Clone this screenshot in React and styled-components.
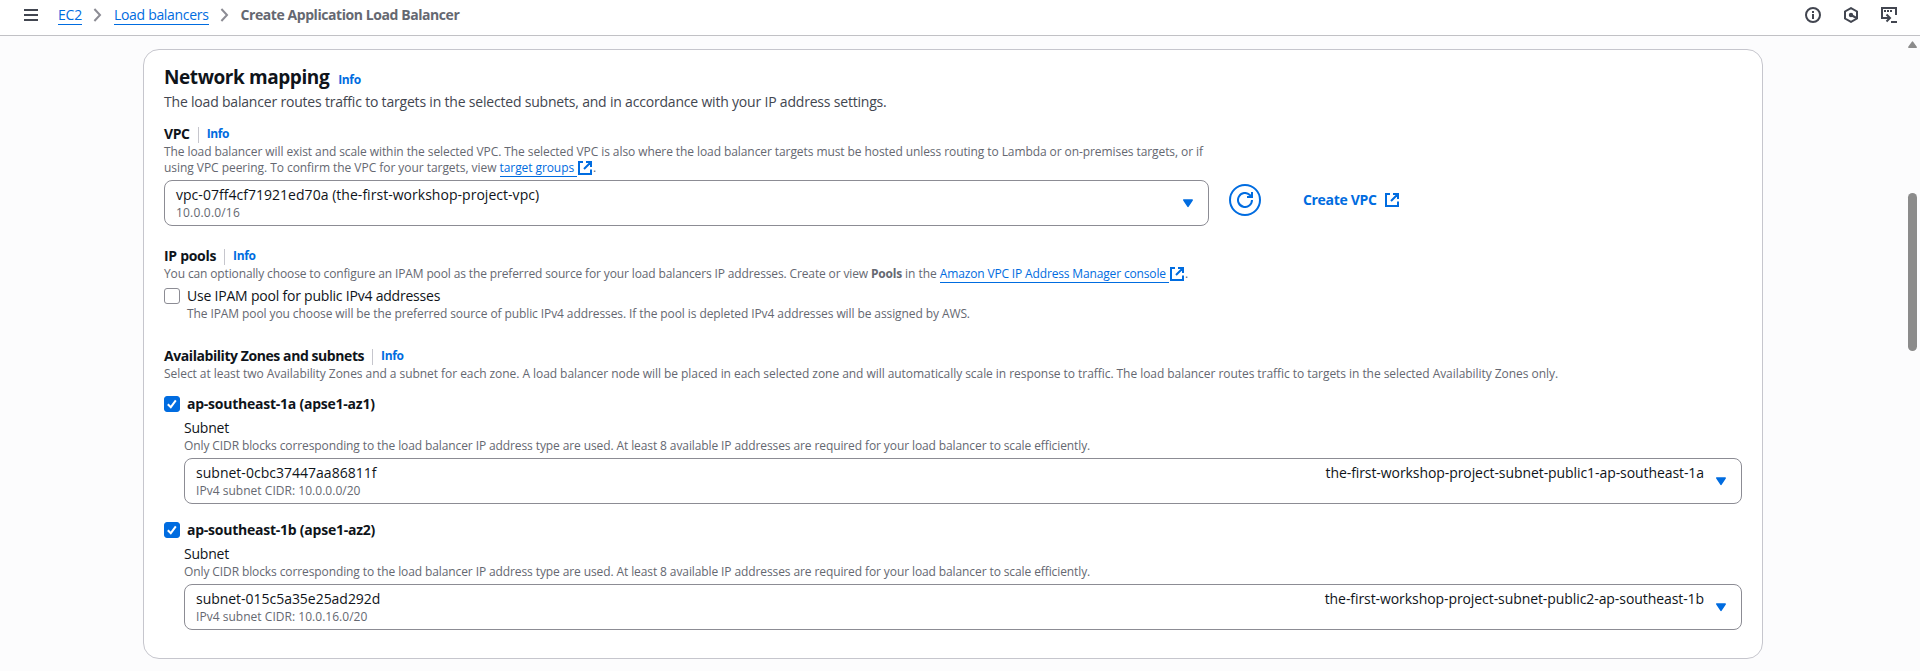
import React from "react";
import styled, { createGlobalStyle } from "styled-components";

const blue = "#006ce0";
const grey = "#656871";

const Global = createGlobalStyle`
  * { box-sizing: border-box; }
  body { margin: 0; background: #fcfcfd; color: #0f141a; overflow: hidden;
    font: 400 14px/20px "Open Sans", "Noto Sans", sans-serif; }
  svg { display: block; }
`;

const T = styled.span`
  white-space: pre;
  letter-spacing: ${(p) => p.$ls || 0}px;
`;

const Page = styled.div`
  height: 671px;
  display: flex;
  flex-direction: column;
`;
const Header = styled.header`
  height: 36px;
  flex: none;
  display: flex;
  align-items: center;
  justify-content: space-between;
  padding: 0 23px 5px 24px;
  background: #fff;
  border-bottom: 1px solid #c1c1c5;
`;
const Crumbs = styled.nav`
  display: flex;
  align-items: center;
`;
const MenuButton = styled.span`
  margin-right: 20px;
`;
const CrumbLink = styled.a`
  color: ${blue};
  height: 20px;
  line-height: 20px;
  border-bottom: 1px solid ${blue};
`;
const Chevron = styled.svg`
  margin: 0 12px 0 11px;
`;
const CrumbCurrent = styled.span`
  color: ${grey};
  font-weight: 700;
`;
const Tools = styled.div`
  display: flex;
  gap: 22px;
`;

const Body = styled.div`
  flex: 1;
  display: flex;
  min-height: 0;
`;
const Content = styled.main`
  flex: 1;
  padding: 13px 142px 12px 143px;
`;
const Scroll = styled.aside`
  width: 15px;
  padding: 5px 3px 0;
`;
const Thumb = styled.div`
  width: 9px;
  height: 158px;
  margin-top: 144px;
  border-radius: 5px;
  background: #8b8b8b;
`;

const Card = styled.section`
  height: 610px;
  border: 1px solid #c6c6cd;
  border-radius: 16px;
  background: #fff;
  padding: 15px 20px 0 20px;
`;
const TitleRow = styled.div`
  display: flex;
  align-items: baseline;
  height: 26px;
`;
const Title = styled.h2`
  margin: 0 9px 0 0;
  font-size: 19px;
  line-height: 24px;
  font-weight: 700;
`;
const Info = styled.a`
  color: ${blue};
  font-size: 12px;
  line-height: 16px;
  font-weight: 700;
`;
const Lead = styled.p`
  margin: 1px 0 0;
  color: #424650;
`;
const LabelRow = styled.div`
  display: flex;
  align-items: center;
  height: 20px;
  margin-top: ${(p) => p.$top}px;
`;
const Label = styled.span`
  font-weight: 700;
`;
const Divider = styled.i`
  width: 1px;
  height: 16px;
  margin: 2px 8px 0 8px;
  background: #c6c6cd;
`;
const Hint = styled.div`
  display: flex;
  height: 16px;
  color: ${grey};
  font-size: 12px;
  line-height: 16px;
`;
const HintLink = styled.a`
  display: flex;
  color: ${blue};
`;
const Underlined = styled.span`
  height: 17px;
  padding-right: 3px;
  border-bottom: 1px solid ${blue};
`;
const Strong = styled.b`
  font-weight: 700;
`;

const SelectRow = styled.div`
  display: flex;
  align-items: flex-start;
  margin-top: 4px;
`;
const SelectBox = styled.div`
  display: flex;
  justify-content: space-between;
  width: ${(p) => p.$w}px;
  height: 46px;
  margin-top: ${(p) => p.$top || 0}px;
  padding: 4px 14px 0 11px;
  border: 1px solid #8c8c94;
  border-radius: 8px;
`;
const OptionText = styled.div`
  display: flex;
  flex-direction: column;
`;
const OptionSub = styled.span`
  color: ${grey};
  font-size: 12px;
  line-height: 16px;
`;
const Trailing = styled.div`
  display: flex;
  gap: 11px;
`;
const Caret = styled.svg`
  margin-top: 13px;
`;
const RefreshButton = styled.button`
  display: flex;
  align-items: center;
  justify-content: center;
  width: 32px;
  height: 32px;
  margin: 4px 42px 0 20px;
  padding: 0;
  border: 2px solid ${blue};
  border-radius: 50%;
  background: #fff;
`;
const CreateLink = styled.a`
  display: flex;
  align-items: center;
  gap: 7px;
  height: 32px;
  margin-top: 4px;
  color: ${blue};
  font-weight: 700;
`;

const CheckRow = styled.div`
  display: flex;
  align-items: center;
  gap: 7px;
  height: 20px;
  margin-top: ${(p) => p.$top}px;
  font-weight: ${(p) => (p.$bold ? 700 : 400)};
`;
const Box = styled.span`
  width: 16px;
  height: 16px;
  border-radius: 3px;
  border: 1px solid ${(p) => (p.$on ? blue : "#8c8c94")};
  background: ${(p) => (p.$on ? blue : "#fff")};
`;
const Indent = styled.div`
  padding-left: ${(p) => p.$by}px;
`;
const FieldName = styled.div`
  margin-top: 4px;
  height: 20px;
`;

const External = () => (
  <svg width="16" height="16" viewBox="0 0 16 16" fill="none" stroke={blue} strokeWidth="2">
    <path d="M6 2H2v12h12V9.5M9 2h5v5M14 2L7 9" />
  </svg>
);
const CaretDown = () => (
  <Caret width="12" height="11" viewBox="0 0 12 11">
    <path d="M1.8 2h8.4L6 8.4z" fill={blue} stroke={blue} strokeWidth="1.5" strokeLinejoin="round" />
  </Caret>
);
const Crumb = () => (
  <Chevron width="9" height="14" viewBox="0 0 9 14" fill="none" stroke="#8c8c94" strokeWidth="2">
    <path d="M1.4 1l5.6 6-5.6 6" />
  </Chevron>
);
const Check = ({ on }) => (
  <Box $on={on}>
    {on && (
      <svg width="14" height="14" viewBox="0 0 14 14" fill="none" stroke="#fff" strokeWidth="2">
        <path d="M2.8 7.2l3 3 5-6.8" />
      </svg>
    )}
  </Box>
);

const Heading = ({ top, ls, children }) => (
  <LabelRow $top={top}>
    <Label><T $ls={ls}>{children}</T></Label>
    <Divider />
    <Info><T $ls={-0.36}>Info</T></Info>
  </LabelRow>
);

const Zone = ({ top, name, subnet, subnetLs, cidr, tag }) => (
  <>
    <CheckRow $top={top} $bold>
      <Check on />
      <T $ls={-0.24}>{name}</T>
    </CheckRow>
    <Indent $by={20}>
      <FieldName><T $ls={-0.21}>Subnet</T></FieldName>
      <Hint>
        <T $ls={-0.104}>Only CIDR blocks corresponding to the load balancer IP address type are used. At least 8 available IP addresses are required for your load balancer to scale efficiently.</T>
      </Hint>
      <SelectBox $w={1558} $top={4}>
        <OptionText>
          <T $ls={subnetLs}>{subnet}</T>
          <OptionSub><T $ls={0.03}>{cidr}</T></OptionSub>
        </OptionText>
        <Trailing>
          <T $ls={-0.078}>{tag}</T>
          <CaretDown />
        </Trailing>
      </SelectBox>
    </Indent>
  </>
);

export default function App() {
  return (
    <Page>
      <Global />
      <Header>
        <Crumbs>
          <MenuButton>
            <svg width="14" height="12" viewBox="0 0 14 12" fill="#424650">
              <path d="M0 0h14v2H0zM0 5h14v2H0zM0 10h14v2H0z" />
            </svg>
          </MenuButton>
          <CrumbLink><T $ls={-0.2}>EC2</T></CrumbLink>
          <Crumb />
          <CrumbLink><T $ls={-0.315}>Load balancers</T></CrumbLink>
          <Crumb />
          <CrumbCurrent><T $ls={-0.43}>Create Application Load Balancer</T></CrumbCurrent>
        </Crumbs>
        <Tools>
          <svg width="16" height="16" viewBox="0 0 16 16" fill="none" stroke="#424650" strokeWidth="2">
            <circle cx="8" cy="8" r="7" />
            <path d="M8 4v2M8 7v5" />
          </svg>
          <svg width="16" height="16" viewBox="0 0 16 16" fill="none" stroke="#424650" strokeWidth="2">
            <path d="M8 1.1l6 3.4v7l-6 3.4-6-3.4v-7z" />
            <circle cx="8" cy="8" r="1.2" fill="#424650" />
            <path d="M8 8l5.5 3" />
          </svg>
          <svg width="16" height="16" viewBox="0 0 16 16" fill="none" stroke="#424650" strokeWidth="2">
            <path d="M4 11H1V1h14v7M3 4h2M6 4h2M9 4h2M10 15h6M4 11h4M5.5 7.5L9 11l-3.5 3.5" />
          </svg>
        </Tools>
      </Header>
      <Body>
        <Content>
          <Card>
            <TitleRow>
              <Title><T $ls={-0.42}>Network mapping</T></Title>
              <Info><T $ls={-0.36}>Info</T></Info>
            </TitleRow>
            <Lead>
              <T $ls={-0.195}>The load balancer routes traffic to targets in the selected subnets, and in accordance with your IP address settings.</T>
            </Lead>

            <Heading top={12} ls={-0.4}>VPC</Heading>
            <Hint>
              <T $ls={-0.082}>The load balancer will exist and scale within the selected VPC. The selected VPC is also where the load balancer targets must be hosted unless routing to Lambda or on-premises targets, or if</T>
            </Hint>
            <Hint>
              <T $ls={-0.048}>{"using VPC peering. To confirm the VPC for your targets, view "}</T>
              <HintLink>
                <Underlined><T $ls={-0.08}>target groups</T></Underlined>
                <External />
              </HintLink>
              <T>.</T>
            </Hint>
            <SelectRow>
              <SelectBox $w={1045}>
                <OptionText>
                  <T $ls={0.03}>vpc-07ff4cf71921ed70a (the-first-workshop-project-vpc)</T>
                  <OptionSub><T $ls={0.19}>10.0.0.0/16</T></OptionSub>
                </OptionText>
                <CaretDown />
              </SelectBox>
              <RefreshButton>
                <svg width="16" height="16" viewBox="0 0 16 16" fill="none" stroke={blue} strokeWidth="2">
                  <path d="M15 8a7 7 0 1 1-2.2-5.1L14.5 5M15 0v5H10" />
                </svg>
              </RefreshButton>
              <CreateLink>
                <T $ls={-0.33}>Create VPC</T>
                <External />
              </CreateLink>
            </SelectRow>

            <Heading top={20} ls={-0.3}>IP pools</Heading>
            <Hint>
              <T $ls={-0.131}>{"You can optionally choose to configure an IPAM pool as the preferred source for your load balancers IP addresses. Create or view "}</T>
              <Strong><T $ls={-0.2}>Pools</T></Strong>
              <T $ls={-0.05}>{" in the "}</T>
              <HintLink>
                <Underlined><T $ls={-0.15}>Amazon VPC IP Address Manager console</T></Underlined>
                <External />
              </HintLink>
              <T>.</T>
            </Hint>
            <CheckRow $top={4}>
              <Check />
              <T $ls={-0.21}>Use IPAM pool for public IPv4 addresses</T>
            </CheckRow>
            <Indent $by={23}>
              <Hint>
                <T $ls={-0.093}>The IPAM pool you choose will be the preferred source of public IPv4 addresses. If the pool is depleted IPv4 addresses will be assigned by AWS.</T>
              </Hint>
            </Indent>

            <Heading top={24} ls={-0.43}>Availability Zones and subnets</Heading>
            <Hint>
              <T $ls={-0.052}>Select at least two Availability Zones and a subnet for each zone. A load balancer node will be placed in each selected zone and will automatically scale in response to traffic. The load balancer routes traffic to targets in the selected Availability Zones only.</T>
            </Hint>
            <Zone
              top={12}
              name="ap-southeast-1a (apse1-az1)"
              subnet="subnet-0cbc37447aa86811f"
              subnetLs={0.018}
              cidr="IPv4 subnet CIDR: 10.0.0.0/20"
              tag="the-first-workshop-project-subnet-public1-ap-southeast-1a"
            />
            <Zone
              top={16}
              name="ap-southeast-1b (apse1-az2)"
              subnet="subnet-015c5a35e25ad292d"
              subnetLs={-0.03}
              cidr="IPv4 subnet CIDR: 10.0.16.0/20"
              tag="the-first-workshop-project-subnet-public2-ap-southeast-1b"
            />
          </Card>
        </Content>
        <Scroll>
          <svg width="9" height="8" viewBox="0 0 9 8">
            <path d="M0.9 6.3L4.5 1.2 8.1 6.3z" fill="#8b8b8b" stroke="#8b8b8b" strokeWidth="1.6" strokeLinejoin="round" />
          </svg>
          <Thumb />
        </Scroll>
      </Body>
    </Page>
  );
}
